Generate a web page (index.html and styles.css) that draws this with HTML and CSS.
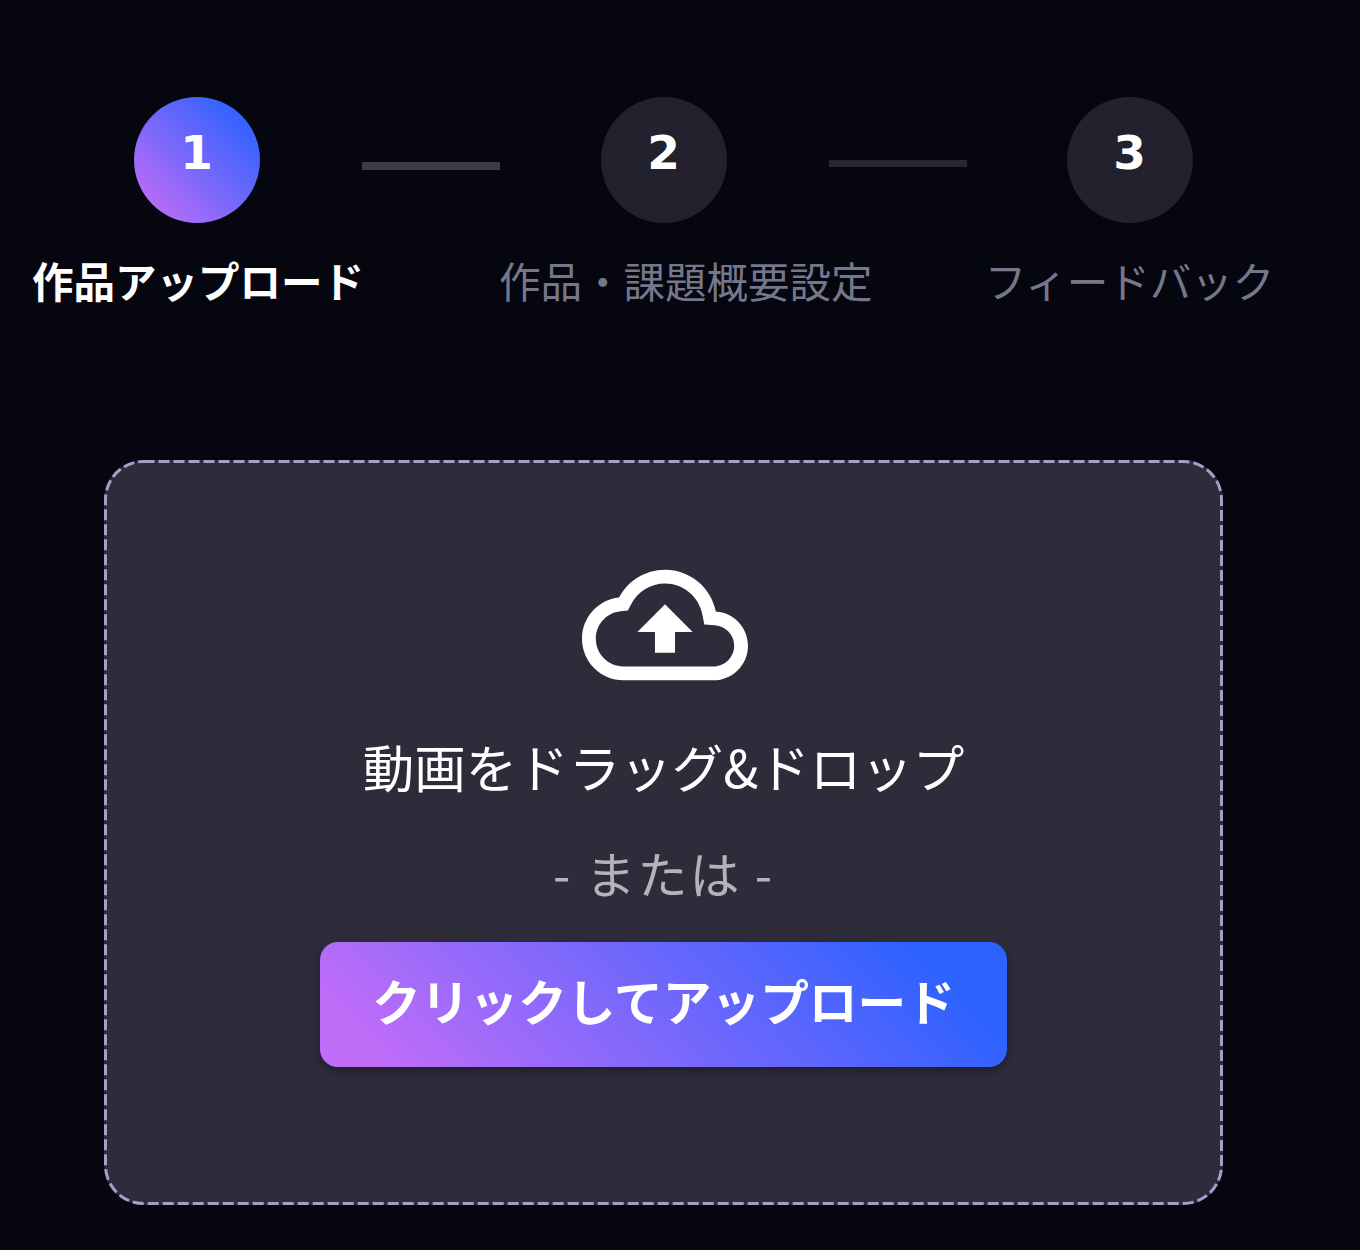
FILE: index.html
```html
<!DOCTYPE html>
<html lang="ja">
<head>
    <meta charset="UTF-8">
    <meta name="viewport" content="width=device-width, initial-scale=1.0">
    <title>作品アップロード</title>
    <link rel="stylesheet" href="styles.css">
</head>
<body>
    <!-- Steps -->
    <div class="steps">
        <div class="step active">
            <div class="step-num">1</div>
            <div class="step-label">作品アップロード</div>
        </div>
        <div class="step-line first"></div>
        <div class="step">
            <div class="step-num">2</div>
            <div class="step-label">作品・課題概要設定</div>
        </div>
        <div class="step-line"></div>
        <div class="step last">
            <div class="step-num">3</div>
            <div class="step-label">フィードバック</div>
        </div>
    </div>

    <!-- Upload box -->
    <div class="upload-box">
        <svg class="upload-border" aria-hidden="true"><rect class="upload-border-rect" x="1.5" y="1.5" rx="38" ry="38"></rect></svg>
        <svg class="upload-icon" viewBox="0 0 24 24" aria-hidden="true">
            <path d="M19.35 10.04C18.67 6.59 15.64 4 12 4 9.11 4 6.6 5.64 5.35 8.04 2.34 8.36 0 10.91 0 14c0 3.31 2.69 6 6 6h13c2.76 0 5-2.24 5-5 0-2.64-2.05-4.78-4.65-4.96zM19 18H6c-2.21 0-4-1.79-4-4 0-2.05 1.53-3.76 3.56-3.97l1.07-.11.5-.95C8.08 7.14 9.94 6 12 6c2.62 0 4.88 1.86 5.39 4.43l.3 1.5 1.53.11c1.56.1 2.78 1.41 2.78 2.96 0 1.65-1.35 3-3 3z"></path>
            <path d="M8 13h2.55v3h2.9v-3H16l-4-4z"></path>
        </svg>
        <p class="upload-title">動画をドラッグ&amp;ドロップ</p>
        <p class="upload-or">- または -</p>
        <button class="upload-btn">クリックしてアップロード</button>
    </div>
</body>
</html>
```

FILE: styles.css
```css
:root {
    --background-dark: #05060f;
    --card-bg: #2e2c3b;
    --step-bg: #22212d;
    --text-primary: #ffffff;
    --text-secondary: #77778c;
    --gradient: linear-gradient(45deg, #c06df8 8%, #2d62ff 88%);
}

body {
    font-family: "Noto Sans CJK JP", "Noto Sans", sans-serif;
    background-color: var(--background-dark);
    color: var(--text-primary);
    margin: 0;
    height: 1250px;
    overflow: hidden;
}

/* Steps */
.steps {
    display: flex;
    align-items: flex-start;
    padding: 97px 0 0 32px;
}

.step {
    width: 329px;
    flex: none;
    text-align: center;
}

.step.last {
    width: 327px;
}

.step-num {
    width: 126px;
    height: 126px;
    margin: 0 auto;
    border-radius: 50%;
    background-color: var(--step-bg);
    font-family: "DejaVu Sans", sans-serif;
    font-size: 47px;
    font-weight: bold;
    line-height: 112px;
}

.step.active .step-num {
    background-image: var(--gradient);
}

.step-label {
    margin-top: 27px;
    font-size: 41.5px;
    line-height: 60px;
    white-space: nowrap;
    color: var(--text-secondary);
}

.step.active .step-label {
    color: var(--text-primary);
    font-weight: bold;
}

.step-line {
    width: 138px;
    height: 7px;
    flex: none;
    margin: 63px -1px 0 1px;
    background-color: #272733;
}

.step-line.first {
    height: 8px;
    margin-top: 65px;
    background-color: #3a3a4a;
}

/* Upload box */
.upload-box {
    position: relative;
    box-sizing: border-box;
    width: 1119px;
    height: 745px;
    margin: 150px 0 0 104px;
    padding-top: 82px;
    border-radius: 40px;
    background-color: var(--card-bg);
    text-align: center;
}

.upload-border {
    position: absolute;
    top: 0;
    left: 0;
    width: 100%;
    height: 100%;
}

.upload-border-rect {
    width: calc(100% - 3px);
    height: calc(100% - 3px);
    fill: none;
    stroke: #a79dcb;
    stroke-width: 3;
    stroke-dasharray: 11 4;
}

.upload-icon {
    display: block;
    width: 166px;
    height: 166px;
    margin: 0 0 0 478px;
    fill: #ffffff;
}

.upload-title {
    margin: 20px 0 0;
    font-size: 51.5px;
    line-height: 76px;
}

.upload-or {
    margin: 33px 0 0;
    font-size: 50px;
    letter-spacing: 2px;
    line-height: 70px;
    color: #b4b3ba;
}

.upload-btn {
    display: block;
    width: 687px;
    height: 125px;
    margin: 35px auto 0;
    padding: 0 0 9px;
    border: none;
    border-radius: 18px;
    background-image: var(--gradient);
    box-shadow: 0 4px 8px rgba(0, 0, 0, 0.35);
    color: var(--text-primary);
    font-family: inherit;
    font-size: 48.7px;
    font-weight: bold;
    cursor: pointer;
}
```
